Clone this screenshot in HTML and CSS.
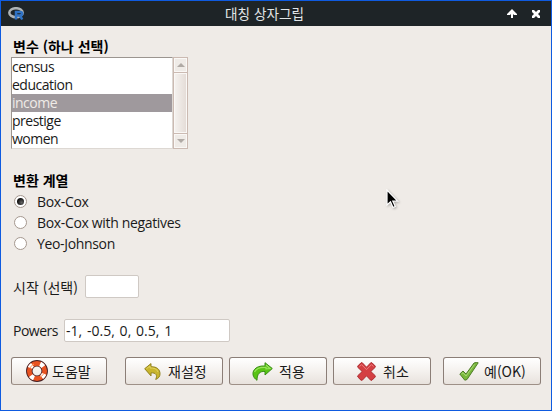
FILE: index.html
```
<!DOCTYPE html>
<html lang="ko">
<head>
<meta charset="utf-8">
<title>대칭 상자그립</title>
<link rel="stylesheet" href="styles.css">
</head>
<body>
<div class="window">
  <header class="titlebar">
    <svg class="logo" width="18" height="14" viewBox="0 0 18 14">
      <ellipse cx="8" cy="5.7" rx="6.7" ry="4.5" fill="none" stroke="#aeb3b6" stroke-width="2.5"/>
      <path d="M8 12.500V5h4q2.200 0 2.200 1.800T12 8.600H8M11.500 9q1 .3 1.800 1.800l.9 1.700" fill="none" stroke="#2f72c4" stroke-width="2.500"/>
    </svg>
    <h1 class="title">대칭 상자그립</h1>
    <div class="controls">
      <svg width="10" height="9" viewBox="0 0 10 9"><path d="M5 0 0 5v1h3l1-1v4h2V5l1 1h3V5Z" fill="#fff"/></svg>
      <svg width="8" height="8" viewBox="0 0 8 8"><path d="M0 0h2l2 2 2-2h2v2L6 4l2 2v2H6L4 6 2 8H0V6l2-2-2-2Z" fill="#fff"/></svg>
    </div>
  </header>
  <main class="content">
    <h2 class="heading">변수 (하나 선택)</h2>
    <div class="listbox">
      <ul class="items">
        <li>census</li>
        <li>education</li>
        <li class="selected">income</li>
        <li>prestige</li>
        <li>women</li>
      </ul>
      <div class="scrollbar">
        <div class="arrow"><svg width="8" height="4" viewBox="0 0 8 4"><path d="M0 4 4 0l4 4Z" fill="#b0aaa5"/></svg></div>
        <div class="thumb"></div>
        <div class="arrow"><svg width="8" height="4" viewBox="0 0 8 4"><path d="M0 0h8L4 4Z" fill="#b0aaa5"/></svg></div>
      </div>
    </div>
    <h2 class="heading family">변환 계열</h2>
    <div class="radios">
      <div class="radio"><i class="dot on"></i><span>Box-Cox</span></div>
      <div class="radio"><i class="dot"></i><span>Box-Cox with negatives</span></div>
      <div class="radio"><i class="dot"></i><span>Yeo-Johnson</span></div>
    </div>
    <div class="field start"><span class="label korean">시작 (선택)</span><div class="entry short"></div></div>
    <div class="field powers"><span class="label">Powers</span><div class="entry long">-1, -0.5, 0, 0.5, 1</div></div>
    <footer class="buttons">
      <div class="button help">
        <svg width="22" height="22" viewBox="0 0 22 22">
          <circle cx="11" cy="11" r="7.700" fill="none" stroke="#471e20" stroke-width="6.500"/>
          <circle cx="11" cy="11" r="7.700" fill="none" stroke="#e85221" stroke-width="4.700"/>
          <circle cx="11" cy="11" r="7.700" fill="none" stroke="#fff" stroke-width="4.700" stroke-dasharray="4 8.095" stroke-dashoffset="-3"/>
          <path d="M4 8q1.500-3 4-4M14 17q3-1 4-4" fill="none" stroke="#ff9861" stroke-width="1"/>
        </svg><span>도움말</span>
      </div>
      <div class="button reset">
        <svg width="17" height="17" viewBox="0 0 17 17"><path d="M.7 5.700 7 .6v3.200c6-.3 9 2.800 9 7 0 2.700-1.500 4.700-4.300 5.600 2-4 .2-7-4.700-6.500v3Z" fill="#c9b52c" stroke="#90811e" stroke-linejoin="round"/><path d="M2.500 5.700 6 3v2c4-.2 7 1 8 4" fill="none" stroke="#e3d360"/></svg><span>재설정</span>
      </div>
      <div class="button apply">
        <svg width="21" height="19" viewBox="0 0 21 19"><path d="M13 .7 20.300 6.500 13 13V9.500c-5.200-.5-8 2.300-8 8.800C.3 15 .1 10.700 2.300 7.700 4.500 4.800 8 3.700 13 4Z" fill="#59c414" stroke="#398d16" stroke-linejoin="round"/><path d="M14 3l4 3.500-4 .3V5.500C8 5 4 7 2.500 10" fill="none" stroke="#99e35d" stroke-width="1.200"/></svg><span>적용</span>
      </div>
      <div class="button cancel">
        <svg width="19" height="19" viewBox="0 0 19 19"><path d="M.8 4 4 .8h1.300l4.200 4.400L13.700.8H15L18.200 4v1.300l-4.400 4.200 4.400 4.200V15L15 18.200h-1.300l-4.200-4.400-4.200 4.400H4L.8 15v-1.300l4.400-4.200L.8 5.300Z" fill="#d43f42" stroke="#ac2d32"/><path d="m2.500 4.600 2-2 5 5 5-5 2 2" fill="none" stroke="#ed7b7d"/></svg><span>취소</span>
      </div>
      <div class="button ok">
        <svg width="20" height="19" viewBox="0 0 20 19"><path d="M.8 12 4 9l3 3L15 1q2.500-1 4.200-.2L8 17.500l-2.200.7Z" fill="#79b83b" stroke="#4f7d29" stroke-linejoin="round"/><path d="m2.500 12 1.500-1.300 3 3.300L15.500 2.500" fill="none" stroke="#a8d777"/></svg><span>예(OK)</span>
      </div>
    </footer>
  </main>
  <svg class="pointer" width="13" height="20" viewBox="0 0 13 20"><path d="M1 1v15l3.500-3.200L7 18.500l2.300-1-2.500-5.300H11.700Z" fill="#000" stroke="#fff" stroke-width="1.200"/></svg>
</div>
</body>
</html>
```

FILE: styles.css
```
* { box-sizing: border-box; }
body { margin: 0; background: #efebe7; color: #1a1a1a; font: 14px/18px "Open Sans", "Noto Sans CJK KR", sans-serif; white-space: nowrap; }
h1, h2, ul { margin: 0; padding: 0; list-style: none; }
svg { display: block; flex: none; }
.window { position: relative; width: 552px; height: 411px; border: 1px solid #0f5be0; overflow: hidden; }
.titlebar { height: 25px; background: #1e2427; display: grid; grid-template-columns: 80px 1fr 80px; align-items: center; }
.logo { margin-left: 7px; }
.title { color: #e2e6e8; font: 400 13.6px/20px "Noto Sans CJK KR", sans-serif; text-align: center; padding-right: 23px; padding-bottom: 1px; }
.controls { display: flex; align-items: center; gap: 15px; justify-content: flex-end; padding-right: 11px; }
.content { padding: 11px 10px 0; }
.heading { padding-left: 2px; height: 20px; font: 700 14px/19px "Noto Sans CJK KR", sans-serif; color: #000; }
.listbox { display: flex; width: 177px; height: 92px; }
.items { width: 162px; border: 1px solid #9b9590; border-right-color: #ddd8d3; border-bottom-color: #ddd8d3; background: #fff; letter-spacing: -.5px; }
.items li { height: 18px; line-height: 18px; }
.items .selected { background: #9f999d; color: #efebe7; }
.scrollbar { width: 15px; display: flex; flex-direction: column; gap: 1px; background: #cbbab2; border: 1px solid #cbbab2; }
.arrow { height: 14px; display: grid; place-items: center; background: #efebe7; border: 1px solid #faf8f6; }
.thumb { flex: 1; background: linear-gradient(90deg, #f4f1ee, #e5ddd8); border: 1px solid #faf8f6; }
.family { margin-top: 22px; }
.radios { letter-spacing: -.34px; }
.radio { height: 21px; display: flex; align-items: center; gap: 10px; padding-left: 3px; }
.dot { width: 13px; height: 13px; border: 1px solid #a5988f; border-radius: 50%; background: #fff; display: grid; place-items: center; }
.on::before { content: ""; width: 7px; height: 7px; border-radius: 50%; background: radial-gradient(circle at 65% 65%, #646464, #111 65%); }
.field { display: flex; align-items: center; padding-left: 2px; height: 23px; }
.start { margin-top: 21px; }
.powers { margin-top: 21px; }
.label { width: 51px; letter-spacing: -.5px; }
.korean { width: 72px; font: 14px/20px "Noto Sans CJK KR", sans-serif; letter-spacing: 0; }
.entry { height: 23px; border: 1px solid #cfc9c4; border-radius: 2px; background: #fff; padding: 1px; line-height: 19px; word-spacing: 1.2px; }
.short { width: 54px; }
.long { width: 166px; }
.buttons { display: flex; height: 28px; margin-top: 15px; }
.button { display: flex; align-items: center; height: 28px; border: 1px solid #8b7e77; border-bottom-color: #9e9087; border-radius: 3px; background: linear-gradient(#fff, #f5f2ef 48%, #e8e2dd); font: 14px/20px "Noto Sans CJK KR", sans-serif; }
.help { width: 96px; gap: 4px; padding-left: 14px; }
.reset { width: 98px; margin-left: 18px; gap: 7px; padding-left: 18px; }
.apply { width: 98px; margin-left: 6px; gap: 6px; padding-left: 22px; }
.cancel { width: 98px; margin-left: 6px; gap: 7px; padding-left: 23px; }
.ok { width: 98px; margin-left: 12px; gap: 5px; padding-left: 15px; }
.pointer { position: absolute; left: 385px; top: 188px; filter: drop-shadow(1px 1px 1px #0004); }
```
